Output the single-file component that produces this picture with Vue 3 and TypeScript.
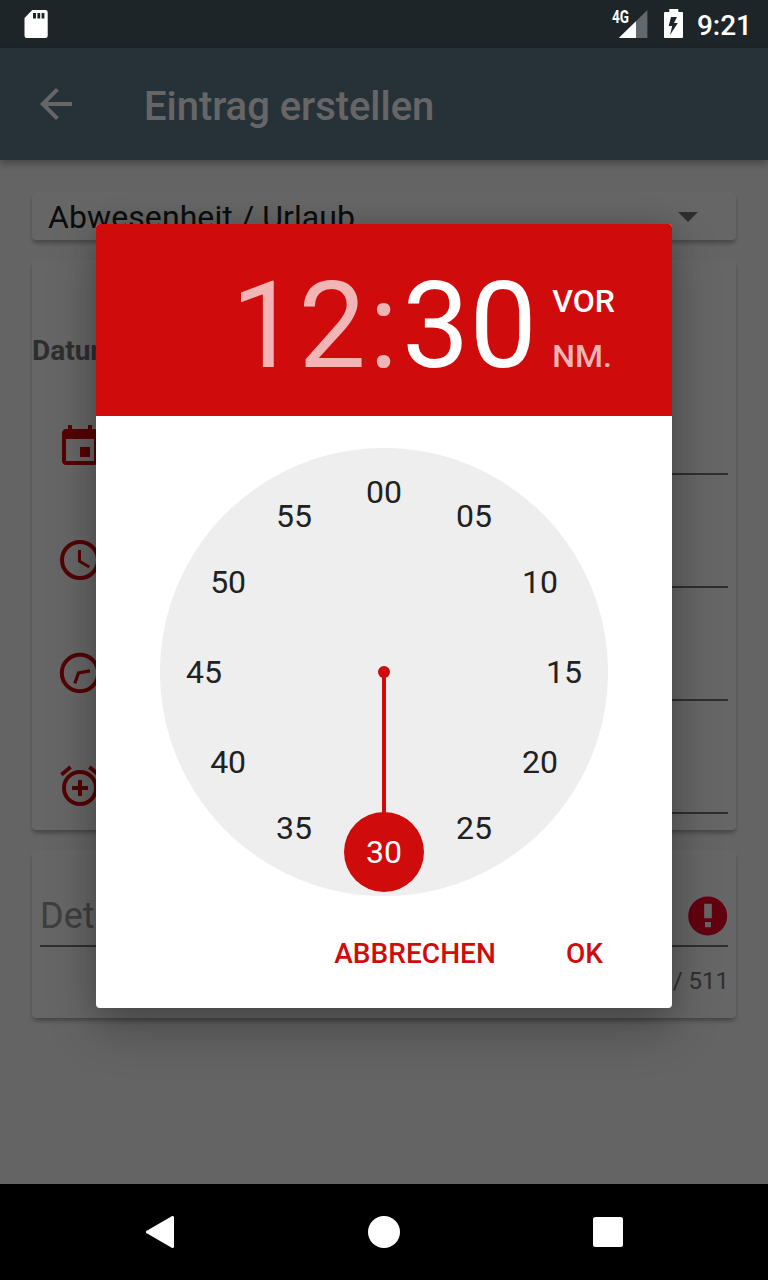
<script setup lang="ts">
interface Mark { label: string; x: number; y: number; active: boolean }

const selectedMinute = 30
const marks: Mark[] = Array.from({ length: 12 }, (_, i) => {
  const minute = i * 5
  const angle = (minute / 60) * Math.PI * 2
  return {
    label: String(minute).padStart(2, '0'),
    x: 224 + Math.sin(angle) * 180,
    y: 224 - Math.cos(angle) * 180,
    active: minute === selectedMinute,
  }
})

const rows: string[] = ['date', 'start', 'end', 'extra']
</script>

<template>
  <div class="screen">
    <div class="app">
      <div class="status-bg"></div>
      <header class="toolbar">
        <svg class="back" width="48" height="48" viewBox="0 0 24 24"><path fill="#fff" d="M20 11H7.83l5.59-5.59L12 4l-8 8 8 8 1.41-1.41L7.83 13H20v-2z" /></svg>
        <h1>Eintrag erstellen</h1>
      </header>
      <main>
        <section class="card select">
          <span>Abwesenheit / Urlaub</span>
          <svg width="20" height="10" viewBox="0 0 20 10"><path d="M0 0h20L10 10z" fill="#737373" /></svg>
        </section>
        <section class="card fields">
          <h2>Datum</h2>
          <div v-for="row in rows" :key="row" class="row">
            <svg class="row-icon" width="48" height="48" viewBox="0 0 24 24">
              <path v-if="row === 'date'" fill="#cf0b0b" d="M17 12h-5v5h5v-5zM16 1v2H8V1H6v2H5c-1.11 0-1.99.9-1.99 2L3 19c0 1.1.89 2 2 2h14c1.1 0 2-.9 2-2V5c0-1.1-.9-2-2-2h-1V1h-2zm3 18H5V8h14v11z" />
              <g v-else-if="row === 'start'" fill="none" stroke="#cf0b0b">
                <circle cx="12" cy="12" r="9" stroke-width="2" />
                <path d="M11.75 7v5.6l4.9 2.9" stroke-width="1.5" />
              </g>
              <g v-else-if="row === 'end'" fill="none" stroke="#cf0b0b">
                <circle cx="12" cy="12" r="9.1" stroke-width="2" />
                <path d="M17 10.9l-5.7 1-1.9 5.3" stroke-width="1.6" />
              </g>
              <g v-else fill="none" stroke="#cf0b0b" stroke-width="2">
                <circle cx="12" cy="13" r="8" />
                <path d="M12 9v8M8 13h8" />
                <path d="M2.7 6.4l4.6-3.9M16.7 2.5l4.6 3.9" stroke-width="1.9" />
              </g>
            </svg>
            <div class="line"></div>
          </div>
        </section>
        <section class="card details">
          <div class="detail-input">
            <span>Details</span>
            <svg width="40" height="40" viewBox="0 0 40 40">
              <circle cx="19.700" cy="20" r="19.500" fill="#f60028" />
              <path d="M16.2 7.8h7.6v14.4h-7.6zM17 26h6v5.3h-6z" fill="#fff" />
            </svg>
          </div>
          <div class="counter">0 / 511</div>
        </section>
      </main>
    </div>

    <div class="scrim"></div>

    <div class="statusbar">
      <svg width="24" height="28" viewBox="0 0 24 28">
        <path fill="#fff" fill-rule="evenodd" d="M8.3 0H21.500Q23.700 0 23.700 2.200V25.800Q23.700 28 21.500 28H2.700Q.5 28 .5 25.800V8zM9 3v5.500h3V3zM13.400 3v5.500h2.800V3zM17.600 3v5.500h2.800V3z" />
      </svg>
      <div class="status-right">
        <svg class="signal" width="38" height="40" viewBox="-1 -5 38 40">
          <path d="M35.400 1v28H6.800z" fill="#63686a" />
          <path d="M24 12.200V29H6.800z" fill="#fff" />
          <text x="0" y="14" textLength="17" lengthAdjust="spacingAndGlyphs">4G</text>
        </svg>
        <svg class="battery" width="20" height="30" viewBox="0 0 20 30">
          <path fill="#fff" fill-rule="evenodd" d="M5.300 0h9v3h4Q19 3 19 4v24q0 1-1 1H1q-1 0-1-1V4Q0 3 1 3h4.300zM7 8L4.700 17h3.500L6 26l7.800-12H10l3-6z" />
        </svg>
        <span class="clock">9:21</span>
      </div>
    </div>

    <div class="dialog">
      <div class="dialog-head">
        <div class="time"><span class="dim">12</span><span class="dim colon">:</span><span>30</span></div>
        <div class="ampm"><span>VOR</span><span class="dim">NM.</span></div>
      </div>
      <svg class="dial" width="448" height="448" viewBox="0 0 448 448">
        <circle cx="224" cy="224" r="224" fill="#eee" />
        <path d="M224 224v150" stroke="#cf0b0b" stroke-width="4" />
        <circle cx="224" cy="224" r="6" fill="#cf0b0b" />
        <circle cx="224" cy="404" r="40" fill="#cf0b0b" />
        <text v-for="m in marks" :key="m.label" :x="m.x" :y="m.y + 11.3" :class="{ active: m.active }">{{ m.label }}</text>
      </svg>
      <div class="actions">
        <button type="button">ABBRECHEN</button>
        <button type="button">OK</button>
      </div>
    </div>

    <nav class="navbar">
      <svg width="32" height="32" viewBox="0 0 32 32"><path d="M3.500 16L28.500 1.500v29z" fill="#fff" stroke="#fff" stroke-width="3" stroke-linejoin="round" /></svg>
      <svg width="32" height="32" viewBox="0 0 32 32"><circle cx="16" cy="16" r="16" fill="#fff" /></svg>
      <svg width="32" height="32" viewBox="0 0 32 32"><rect x="1" y="1" width="30" height="30" rx="2.500" fill="#fff" /></svg>
    </nav>
  </div>
</template>

<style>
body { margin: 0; background: #000; }
</style>

<style scoped>
.screen { position: relative; width: 768px; height: 1280px; overflow: hidden; font-family: Roboto, sans-serif; }
.app { height: 1184px; background: #fafafa; }
.status-bg { height: 48px; background: #4b5c64; }
.toolbar { position: relative; height: 112px; background: #607d8b; display: flex; align-items: center; box-shadow: 0 3px 8px rgba(0, 0, 0, .34); }
.back { margin-left: 32px; }
h1 { margin: 6px 0 0 64px; font-size: 40px; line-height: 48px; font-weight: 500; letter-spacing: -.04px; color: #fff; }
main { padding: 32px; display: flex; flex-direction: column; gap: 20px; }
.card { background: #fff; border-radius: 4px; box-shadow: 0 4px 4px -1px rgba(0, 0, 0, .3), 0 0 1px rgba(0, 0, 0, .12); box-sizing: border-box; }
.select { height: 48px; padding: 0 38px 0 16px; display: flex; justify-content: space-between; align-items: center; font-size: 32px; line-height: 38px; color: #212121; }
.select span { margin-top: 1px; letter-spacing: .09px; }
.select svg { margin-top: 2px; }
.fields { height: 570px; padding: 74px 8px 0 0; }
h2 { margin: 0; height: 28px; font-size: 28px; line-height: 34px; font-weight: 700; color: #737373; }
.row { height: 113px; display: flex; align-items: flex-end; gap: 24px; padding-left: 24px; }
.row-icon { margin-bottom: 4px; }
.line { flex: 1; height: 2px; background: #757575; }
.details { height: 168px; padding: 36px 8px 0; }
.detail-input { height: 61px; box-sizing: border-box; border-bottom: 2px solid #757575; display: flex; align-items: center; justify-content: space-between; font-size: 36px; line-height: 44px; color: #9b9b9b; }
.counter { margin: 20px -1px 0 0; text-align: right; font-size: 24px; line-height: 28px; color: #757575; }
.scrim { position: absolute; inset: 0 0 96px; background: rgba(0, 0, 0, .6); }
.statusbar { position: absolute; top: 0; left: 0; right: 0; height: 48px; padding: 0 16px 0 24px; display: flex; align-items: center; justify-content: space-between; box-sizing: border-box; color: #fff; }
.status-right { display: flex; align-items: center; }
.status-right text { font-size: 18px; font-weight: 700; fill: #fff; }
.battery { margin-left: 15px; }
.clock { margin-left: 13px; padding-top: 4px; font-size: 28px; line-height: 34px; font-weight: 500; }
.dialog { position: absolute; top: 224px; left: 96px; width: 576px; height: 784px; background: #fff; border-radius: 4px; overflow: hidden; box-shadow: 0 20px 48px rgba(0, 0, 0, .28), 0 0 24px rgba(0, 0, 0, .12); }
.dialog-head { height: 192px; background: #cf0b0b; color: #fff; display: flex; align-items: center; padding-left: 135px; box-sizing: border-box; }
.time { display: flex; font-size: 120px; line-height: 140px; margin-top: 11px; white-space: nowrap; }
.colon { margin: 0 4px 0 3px; }
.ampm { display: flex; flex-direction: column; margin-left: 15.500px; margin-top: 17px; font-size: 32px; line-height: 55px; font-weight: 500; }
.dim { color: #f2b5b5; }
.dial { display: block; margin: 32px auto 0; }
.dial text { font-size: 32px; text-anchor: middle; fill: #212121; }
.dial text.active { fill: #fff; }
.actions { display: flex; justify-content: flex-end; padding: 41px 69px 0 0; gap: 70px; }
button { border: 0; padding: 0; background: none; font: 500 28px/34px Roboto, sans-serif; letter-spacing: .05px; color: #cf0b0b; }
.navbar { height: 96px; background: #000; display: flex; justify-content: space-between; align-items: center; padding: 0 144px; box-sizing: border-box; }
</style>
